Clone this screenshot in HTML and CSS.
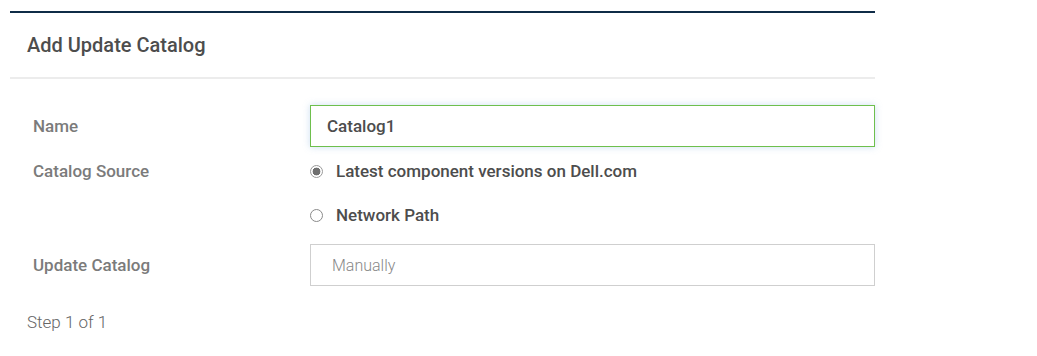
FILE: index.html
```html
<!DOCTYPE html>
<html>
<head>
<meta charset="utf-8">
<link rel="stylesheet" href="styles.css">
</head>
<body>
<div class="dialog">
  <div class="header"><h1 class="title">Add Update Catalog</h1></div>
  <div class="form">
    <div class="label label-name">Name</div>
    <div class="field"><div class="input input-active">Catalog1</div></div>

    <div class="label label-source">Catalog Source</div>
    <div class="field radios">
      <div class="radio"><span class="dot checked"></span><span>Latest component versions on Dell.com</span></div>
      <div class="radio"><span class="dot"></span><span>Network Path</span></div>
    </div>

    <div class="label label-update">Update Catalog</div>
    <div class="field"><div class="input select">Manually</div></div>
  </div>
  <div class="footer">Step 1 of 1</div>
</div>
</body>
</html>
```

FILE: styles.css
```css
html, body { margin: 0; padding: 0; background: #fff; }
body { font-family: Roboto, "Liberation Sans", sans-serif; font-size: 17px; }
.dialog {
  margin: 11px 0 0 10px;
  width: 865px;
  border-top: 2px solid #0f2c47;
}
.header {
  height: 64px;
  display: flex;
  align-items: center;
  padding-left: 17px;
  border-bottom: 2px solid #ececec;
}
.title {
  margin: 0;
  font-size: 20px;
  font-weight: 500;
  color: #4d4d4d;
}
.form {
  display: grid;
  grid-template-columns: 300px 1fr;
  padding-top: 26px;
}
.label {
  padding-left: 23px;
  font-weight: 500;
  color: #7b7b7b;
  display: flex;
  align-items: center;
}
.label-name { height: 42px; }
.label-source { height: 24px; margin-top: 12px; align-self: start; }
.label-update { height: 42px; margin-top: 17px; }
.field { min-width: 0; }
.input {
  box-sizing: border-box;
  height: 42px;
  display: flex;
  align-items: center;
  border: 1px solid #cfcfcf;
  padding-left: 16px;
  color: #4d4d4d;
  font-weight: 500;
}
.input-active {
  border-color: #6ebf4d;
  box-shadow: 0 0 7px rgba(110, 160, 215, 0.35);
}
.select {
  margin-top: 17px;
  padding-left: 21px;
  font-size: 16px;
  font-weight: 300;
  color: #888;
}
.radios {
  margin-top: 12px;
  display: flex;
  flex-direction: column;
  gap: 20px;
}
.radio {
  height: 24px;
  display: flex;
  align-items: center;
  gap: 13px;
  color: #4d4d4d;
  font-weight: 500;
}
.dot {
  box-sizing: border-box;
  width: 13px;
  height: 13px;
  border-radius: 50%;
  border: 1px solid #8a8a8a;
  flex: none;
}
.dot.checked {
  border-color: #9a9a9a;
  background: radial-gradient(circle, #6f6f6f 0 3.6px, #fff 4.2px);
}
.footer {
  padding: 27px 0 0 17px;
  height: 18px;
  line-height: 18px;
  color: #666;
  font-weight: 300;
}
```
